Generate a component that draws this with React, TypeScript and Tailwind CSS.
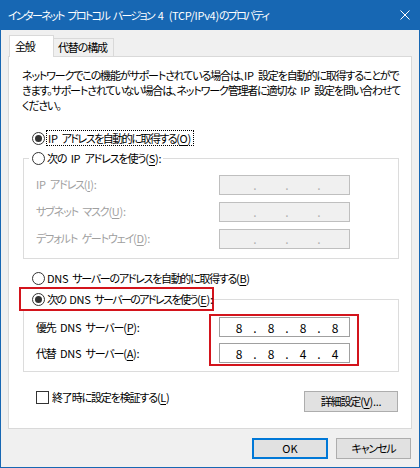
import React from 'react';

function Radio({ checked = false }: { checked?: boolean }) {
  return (
    <span className="flex h-[13px] w-[13px] shrink-0 items-center justify-center rounded-full border border-[#333333] bg-white">
      {checked && <span className="h-[7px] w-[7px] rounded-full bg-[#333333]" />}
    </span>
  );
}

// latin runs keep (almost) normal spacing, only the CJK text is squeezed
function Lat({ children }: { children: React.ReactNode }) {
  return <span className="tracking-[-0.3px]">{children}</span>;
}

function Key({ k }: { k: string }) {
  return (
    <Lat>
      (<span className="underline underline-offset-[2px]">{k}</span>)
    </Lat>
  );
}

function IpField({ octets, disabled = false }: { octets?: string[]; disabled?: boolean }) {
  const parts = ['', '.', '', '.', '', '.', ''];
  return (
    <div
      className={`flex h-[20px] w-[131px] items-center border pl-[11px] text-[12px] tracking-normal ${
        disabled ? 'border-[#bfbfbf] bg-[#f0f0f0] text-[#b0b0b0]' : 'border-[#a0a0a0] bg-white text-black'
      }`}
    >
      {parts.map((p, i) => (
        <span key={i} className="w-[16px] text-center">
          {p === '.' ? '.' : octets ? octets[i / 2] : ''}
        </span>
      ))}
    </div>
  );
}

function Button({ label, primary = false, className = '' }: { label: React.ReactNode; primary?: boolean; className?: string }) {
  return (
    <div
      className={`flex h-[21px] items-center justify-center whitespace-nowrap bg-[#e1e1e1] ${
        primary ? 'border-2 border-[#0078d7]' : 'border border-[#adadad]'
      } ${className}`}
    >
      <span>{label}</span>
    </div>
  );
}

export default function App() {
  return (
    <div className="flex h-[468px] w-[420px] flex-col overflow-hidden whitespace-nowrap bg-[#f0f0f0] text-[11px] leading-[15px] tracking-[-1.15px] text-black [font-family:'Noto_Sans_CJK_JP','Noto_Sans',sans-serif] [font-feature-settings:'palt'] [word-spacing:3px]">
      {/* title bar */}
      <div className="flex h-[30px] shrink-0 items-center justify-between bg-[#1767b3] pl-[8px] pr-[10px] text-white">
        <span className="tracking-[-1.7px]">
          インターネット プロトコル バージョン <Lat>4 (TCP/IPv4)</Lat>のプロパティ
        </span>
        <svg width="10" height="10" viewBox="0 0 10 10" stroke="white" strokeWidth="1">
          <path d="M0.5 0.5 L9.5 9.5 M9.5 0.5 L0.5 9.5" />
        </svg>
      </div>

      <div className="flex flex-1 flex-col border-x border-b border-[#1767b3] px-[7px]">
        {/* tabs */}
        <div className="mt-[5px] flex items-end pl-[1px]">
          <div className="relative z-10 -mb-px flex h-[22px] w-[45px] items-center border-x border-t border-[#d9d9d9] bg-white pl-[5px]">
            全般
          </div>
          <div className="flex h-[18px] w-[60px] items-center border-r border-t border-[#d9d9d9] pl-[4px]">
            代替の構成
          </div>
        </div>

        {/* panel */}
        <div className="flex h-[373px] flex-col border border-[#d9d9d9] bg-white pl-[13px] pt-[11px]">
          <p>
            ネットワークでこの機能がサポートされている場合は、<Lat>IP</Lat> 設定を自動的に取得することがで
            <br />
            きます。サポートされていない場合は、ネットワーク管理者に適切な <Lat>IP</Lat> 設定を問い合わせて
            <br />
            ください。
          </p>

          <div className="mt-[17px] flex h-[16px] items-center pl-[10px]">
            <Radio checked />
            <span className="ml-px border border-dotted border-black pl-px pr-[2px] leading-[14px] tracking-[-1.5px]">
              <Lat>IP</Lat> アドレスを自動的に取得する<Key k="O" />
            </span>
          </div>

          <fieldset className="ml-px mt-[3px] w-[376px] border border-[#dcdcdc] pb-[9px] pl-[12px] pt-[7px]">
            <legend className="ml-[-7px] flex h-[18px] items-center gap-[2px] px-[3px]">
              <Radio />
              <span>
                次の <Lat>IP</Lat> アドレスを使う<Key k="S" />:
              </span>
            </legend>
            <div className="flex flex-col gap-[6px] text-[#a0a0a0]">
              <div className="flex h-[21px] items-center">
                <span className="w-[183px]">
                  <Lat>IP</Lat> アドレス<Key k="I" />:
                </span>
                <IpField disabled />
              </div>
              <div className="flex h-[21px] items-center">
                <span className="w-[183px]">
                  サブネット マスク<Key k="U" />:
                </span>
                <IpField disabled />
              </div>
              <div className="flex h-[21px] items-center">
                <span className="w-[183px]">
                  デフォルト ゲートウェイ<Key k="D" />:
                </span>
                <IpField disabled />
              </div>
            </div>
          </fieldset>

          <div className="mt-[11px] flex h-[16px] items-center gap-[2px] pl-[10px]">
            <Radio />
            <span className="tracking-[-1.3px]">
              <Lat>DNS</Lat> サーバーのアドレスを自動的に取得する<Key k="B" />
            </span>
          </div>

          <fieldset className="ml-px mt-px w-[376px] border border-[#dcdcdc] pb-[5px]">
            <legend className="ml-[-5px] flex h-[24px] w-[195px] items-center gap-[2px] border-2 border-[#d3141c] bg-white pl-[11px]">
              <Radio checked />
              <span className="tracking-[-1.6px]">
                次の <Lat>DNS</Lat> サーバーのアドレスを使う<Key k="E" />:
              </span>
            </legend>
            <div className="mt-[3px] flex items-start">
              <div className="flex w-[185px] flex-col gap-[6px] pl-[12px] pt-[3px]">
                <div className="flex h-[20px] items-center">
                  <span>
                    優先 <Lat>DNS</Lat> サーバー<Key k="P" />:
                  </span>
                </div>
                <div className="flex h-[20px] items-center">
                  <span>
                    代替 <Lat>DNS</Lat> サーバー<Key k="A" />:
                  </span>
                </div>
              </div>
              <div className="flex flex-col gap-[6px] border-2 border-[#d3141c] py-px pl-[8px] pr-[7px]">
                <IpField octets={['8', '8', '8', '8']} />
                <IpField octets={['8', '8', '4', '4']} />
              </div>
            </div>
          </fieldset>

          <div className="mt-[17px] flex items-start justify-between">
            <div className="ml-[14px] flex h-[16px] items-center gap-[3px]">
              <span className="h-[13px] w-[13px] border border-[#333333] bg-white" />
              <span>
                終了時に設定を検証する<Key k="L" />
              </span>
            </div>
            <Button
              className="mr-[13px] mt-[2px] w-[94px]"
              label={
                <>
                  詳細設定<Key k="V" />
                  <Lat>...</Lat>
                </>
              }
            />
          </div>
        </div>

        {/* dialog buttons */}
        <div className="mt-[9px] flex justify-end gap-[8px] pr-px">
          <Button primary label="OK" className="w-[76px] tracking-normal" />
          <Button label="キャンセル" className="w-[75px]" />
        </div>
      </div>
    </div>
  );
}
